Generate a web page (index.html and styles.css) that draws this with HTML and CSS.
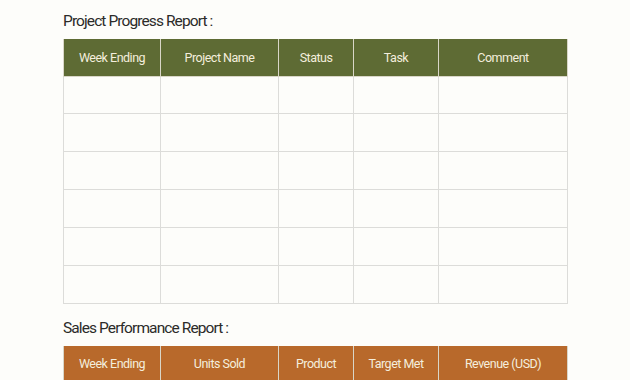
FILE: index.html
```html
<!DOCTYPE html>
<html>
<head>
<meta charset="utf-8">
<link rel="stylesheet" href="styles.css">
</head>
<body>
<div class="page">
  <section class="report">
    <h2 class="title">Project Progress Report :</h2>
    <table class="grid green">
      <colgroup><col class="c1"><col class="c2"><col class="c3"><col class="c4"><col class="c5"></colgroup>
      <thead><tr><th>Week Ending</th><th>Project Name</th><th>Status</th><th>Task</th><th>Comment</th></tr></thead>
      <tbody>
        <tr><td></td><td></td><td></td><td></td><td></td></tr>
        <tr><td></td><td></td><td></td><td></td><td></td></tr>
        <tr><td></td><td></td><td></td><td></td><td></td></tr>
        <tr><td></td><td></td><td></td><td></td><td></td></tr>
        <tr><td></td><td></td><td></td><td></td><td></td></tr>
        <tr><td></td><td></td><td></td><td></td><td></td></tr>
      </tbody>
    </table>
  </section>
  <section class="report second">
    <h2 class="title">Sales Performance Report :</h2>
    <table class="grid orange">
      <colgroup><col class="c1"><col class="c2"><col class="c3"><col class="c4"><col class="c5"></colgroup>
      <thead><tr><th>Week Ending</th><th>Units Sold</th><th>Product</th><th>Target Met</th><th>Revenue (USD)</th></tr></thead>
      <tbody>
        <tr><td></td><td></td><td></td><td></td><td></td></tr>
      </tbody>
    </table>
  </section>
</div>
</body>
</html>
```
FILE: styles.css
```css
html, body {
  margin: 0;
  padding: 0;
  background: #fdfdfa;
}
body {
  font-family: Roboto, "Liberation Sans", sans-serif;
}
.page {
  padding: 11px 0 0 63px;
  width: 504px;
}
.title {
  margin: 0;
  height: 28px;
  font-size: 15.5px;
  font-weight: 400;
  letter-spacing: -0.9px;
  line-height: 20px;
  color: #2b2b29;
}
.second {
  margin-top: 14px;
}
.second .title {
  height: 28px;
}
.grid {
  border-collapse: collapse;
  table-layout: fixed;
  width: 504px;
}
.c1 { width: 97px; }
.c2 { width: 118px; }
.c3 { width: 75px; }
.c4 { width: 85px; }
.c5 { width: 129px; }
.grid th {
  height: 37px;
  padding: 0;
  box-sizing: border-box;
  font-size: 12.5px;
  font-weight: 400;
  letter-spacing: -0.5px;
  color: #f4eedd;
  border: 1px solid #d9d6c8;
  border-top: none;
}
.green th { background: #5e6b34; }
.orange th { background: #b8692b; }
.grid td {
  height: 38px;
  padding: 0;
  box-sizing: border-box;
  border: 1px solid #dcdcd9;
}
.grid tbody tr:first-child td { height: 37px; }
```
